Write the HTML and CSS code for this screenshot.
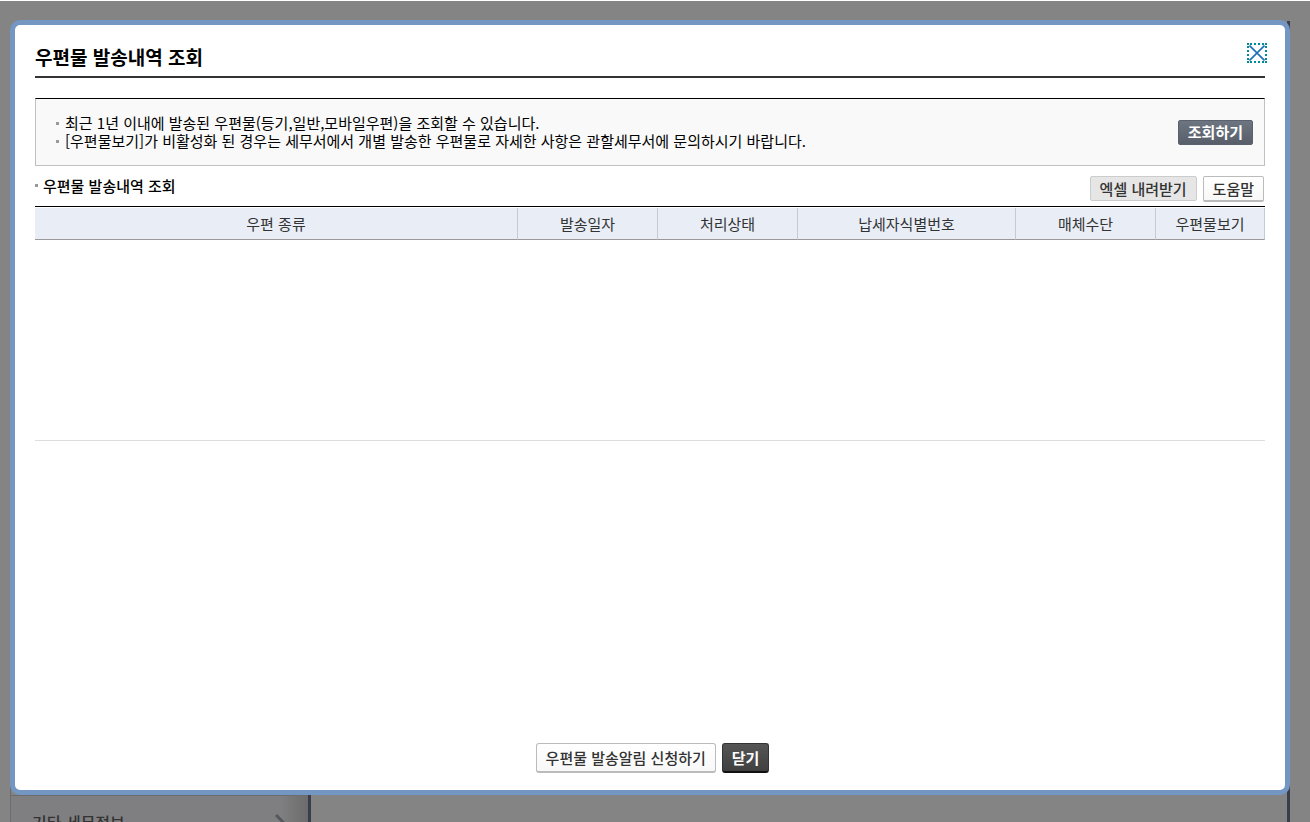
FILE: index.html
```html
<!DOCTYPE html>
<html lang="ko">
<head>
    <meta charset="UTF-8">
    <title>우편물 발송내역 조회</title>
    <link rel="stylesheet" href="styles.css">
</head>
<body>
    <div class="page">
        <div class="container">
            <nav class="lnb">
                <a class="lnb_item" href="#">
                    <span>기타 세무정보</span>
                    <svg width="10" height="16" viewBox="0 0 10 16"><path d="M1 1 L8 8 L1 15" fill="none" stroke="#55575c" stroke-width="3"/></svg>
                </a>
            </nav>
        </div>
    </div>

    <div class="popup" role="dialog" aria-labelledby="pop_title">
        <div class="pop_head">
            <h1 id="pop_title">우편물 발송내역 조회</h1>
            <button type="button" class="btn_close" aria-label="닫기">
                <svg width="16" height="16" viewBox="0 0 16 16"><path d="M0.500 0.500 L15.500 15.500 M15.500 0.500 L0.500 15.500" fill="none" stroke="#1a6fb5" stroke-width="1.600"/></svg>
            </button>
        </div>

        <div class="info_box">
            <ul class="info_list">
                <li>최근 1년 이내에 발송된 우편물(등기,일반,모바일우편)을 조회할 수 있습니다.</li>
                <li>[우편물보기]가 비활성화 된 경우는 세무서에서 개별 발송한 우편물로 자세한 사항은 관할세무서에 문의하시기 바랍니다.</li>
            </ul>
            <button type="button" class="btn btn_search">조회하기</button>
        </div>

        <div class="sub_head">
            <h2>우편물 발송내역 조회</h2>
            <div class="btns">
                <button type="button" class="btn btn_excel">엑셀 내려받기</button>
                <button type="button" class="btn btn_help">도움말</button>
            </div>
        </div>

        <div class="grid">
            <table>
                <colgroup>
                    <col>
                    <col class="col_m">
                    <col class="col_m">
                    <col class="col_l">
                    <col class="col_m">
                    <col class="col_s">
                </colgroup>
                <thead>
                    <tr>
                        <th scope="col">우편 종류</th>
                        <th scope="col">발송일자</th>
                        <th scope="col">처리상태</th>
                        <th scope="col">납세자식별번호</th>
                        <th scope="col">매체수단</th>
                        <th scope="col">우편물보기</th>
                    </tr>
                </thead>
                <tbody></tbody>
            </table>
        </div>

        <div class="pop_foot">
            <button type="button" class="btn btn_apply">우편물 발송알림 신청하기</button>
            <button type="button" class="btn btn_dark">닫기</button>
        </div>
    </div>
</body>
</html>
```
FILE: styles.css
```css
*{
    box-sizing: border-box;
}
body{
    margin: 0;
    height: 100vh;
    overflow: hidden;
    background: #848484;
    border-top: 1px solid #fff;
    font-family: "Noto Sans CJK KR", sans-serif;
    font-size: 15px;
    color: #000;
}
h1, h2, ul{
    margin: 0;
    padding: 0;
}

/* 뒤쪽 화면 */
.page{
    height: 100%;
    padding: 20px 20px 0 10px;
}
.container{
    display: flex;
    align-items: flex-end;
    height: 100%;
    border-right: 3px solid #383e4b;
}
.lnb{
    width: 301px;
    height: 50%;
    display: flex;
    flex-direction: column;
    justify-content: flex-end;
    border-left: 1px solid #6c6c6c;
    border-right: 3px solid #383e4b;
}
.lnb_item{
    display: flex;
    align-items: center;
    justify-content: space-between;
    height: 52px;
    margin-bottom: -25px;
    padding: 0 23px 0 21px;
    border-top: 1px solid #6c6c6c;
    background: linear-gradient(to right, #7f7f81 270px, #6c6c6c);
    color: #333;
    font-size: 16px;
    font-weight: 500;
    text-decoration: none;
}

/* 팝업 */
.popup{
    position: fixed;
    top: 20px;
    right: 20px;
    bottom: 27px;
    left: 10px;
    display: flex;
    flex-direction: column;
    padding: 15px 20px 17px;
    border: 5px solid #7396c3;
    border-radius: 10px;
    background: #fff;
}
.pop_head{
    display: flex;
    justify-content: space-between;
    align-items: flex-start;
    height: 38px;
    border-bottom: 2px solid #333;
}
.pop_head h1{
    font-size: 19px;
    font-weight: 700;
    line-height: 34px;
}
.btn_close{
    display: flex;
    align-items: center;
    justify-content: center;
    width: 20px;
    height: 20px;
    margin: 3px -2px 0 0;
    padding: 0;
    border: 2px dotted #008c95;
    background: none;
}
.btn_close svg{
    flex: none;
}

.info_box{
    display: flex;
    align-items: center;
    justify-content: space-between;
    margin-top: 20px;
    height: 68px;
    padding: 0 11px 0 20px;
    border: 1px solid #c0c0c0;
    border-top-color: #000;
    background: #f9f9f9;
}
.info_list{
    list-style: none;
}
.info_list li{
    position: relative;
    padding-left: 9px;
    line-height: 18px;
}
.info_list li::before,
.sub_head h2::before{
    content: "";
    position: absolute;
    top: 8px;
    left: 0;
    width: 3px;
    height: 3px;
    background: #999;
}

.btn{
    height: 25px;
    padding: 0 9px;
    border: 1px solid #bbb;
    border-radius: 2px;
    font-family: inherit;
    font-size: 15px;
    font-weight: 500;
    line-height: 22px;
    color: #333;
    white-space: nowrap;
}
.btn_search{
    border-color: #5b626d;
    background: linear-gradient(#6d7580, #585f6b);
    color: #fff;
    font-weight: 700;
}
.btn_excel{
    border-color: #ccc;
    background: #e6e6e6;
}
.btn_help{
    height: 26px;
    border-bottom-width: 2px;
    background: linear-gradient(#fff, #f8f8f8);
}

.sub_head{
    display: flex;
    justify-content: space-between;
    align-items: flex-start;
    height: 40px;
    padding: 10px 1px 0 0;
}
.sub_head h2{
    position: relative;
    padding-left: 8px;
    font-size: 15px;
    font-weight: 500;
    line-height: 20px;
}
.btns{
    display: flex;
    align-items: flex-start;
    gap: 6px;
}

.grid{
    height: 235px;
    border-top: 1px solid #000;
    border-bottom: 1px solid #ddd;
}
.grid table{
    width: 100%;
    margin-top: 1px;
    table-layout: fixed;
    border-collapse: separate;
    border-spacing: 0;
}
.grid th{
    height: 32px;
    padding: 0;
    border-right: 1px solid #c3cad8;
    border-bottom: 1px solid #999;
    background: #e8edf6;
    color: #333;
    font-size: 15px;
    font-weight: 400;
    line-height: 20px;
}
.col_s{
    width: 109px;
}
.col_m{
    width: 140px;
}
.col_l{
    width: 218px;
}

.pop_foot{
    display: flex;
    justify-content: center;
    gap: 6px;
    margin-top: auto;
    padding-left: 5px;
}
.pop_foot .btn{
    height: 30px;
    border-bottom-width: 2px;
    border-radius: 3px;
}
.btn_apply{
    background: linear-gradient(#fff, #f8f8f8);
}
.pop_foot .btn_dark{
    border-color: #333 #333 #111;
    background: linear-gradient(#555, #404040);
    color: #fff;
    font-weight: 700;
}
```
